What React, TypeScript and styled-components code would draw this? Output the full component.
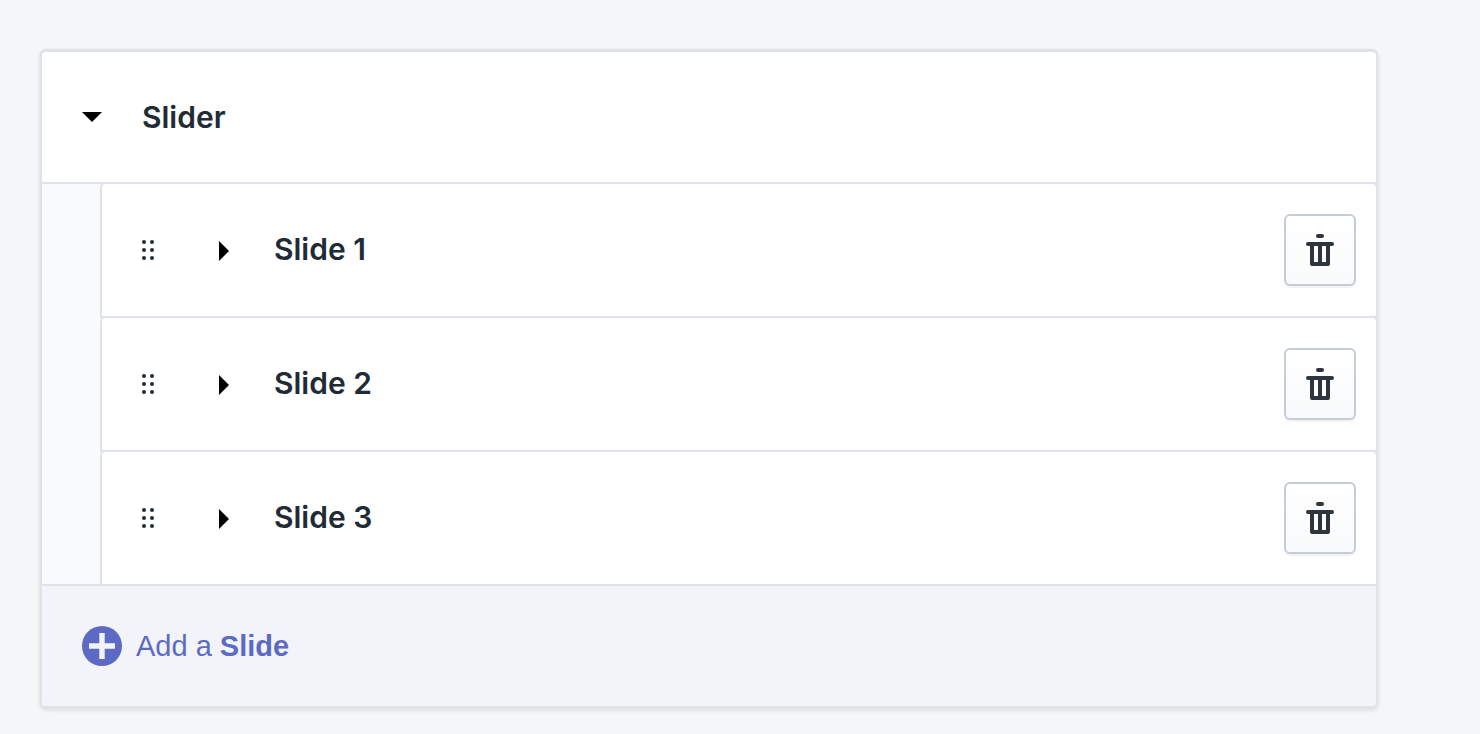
import React, { useState } from "react";
import styled, { createGlobalStyle } from "styled-components";

const GlobalStyle = createGlobalStyle`
  *, *::before, *::after { box-sizing: border-box; }
  body {
    margin: 0;
    background: #f4f6f8;
    color: #212b36;
    font-family: Inter, "Liberation Sans", sans-serif;
  }
  button {
    margin: 0;
    padding: 0;
    border: 0;
    background: none;
    color: inherit;
    font: inherit;
    cursor: pointer;
  }
  svg { display: block; }
`;

const Page = styled.main`
  padding: 50px 102px 26px 40px;
`;

const Card = styled.section`
  border: 2px solid #dfe3e8;
  border-radius: 6px;
  background: #f9fafb;
  overflow: hidden;
  box-shadow: 0 -1px 1px rgba(63, 63, 68, 0.12), 0 2px 4px rgba(63, 63, 68, 0.15);
`;

const Header = styled.header`
  display: flex;
  align-items: center;
  gap: 40px;
  height: 130px;
  padding: 0 40px;
  background: #fff;
`;

const Title = styled.h2`
  margin: 0;
  font-size: 30px;
  line-height: 40px;
  font-weight: 600;
`;

const SlideTitle = styled(Title).attrs({ as: "h3" })`
  flex: 1;
  padding-bottom: 2px;
`;

const SlideList = styled.ul`
  margin: 0;
  padding: 0 0 0 58px;
  list-style: none;
  border-top: 2px solid #dfe3e8;
  background: #f9fafc;
`;

const SlideRow = styled.li`
  display: flex;
  align-items: center;
  height: 136px;
  margin: -2px -2px 0 0;
  padding: 0 20px 0 40px;
  border: 2px solid #dfe3e8;
  border-radius: 6px 6px 0 0;
  background: #fff;

  &:last-child {
    height: 134px;
    border-bottom: 0;
  }
`;

const DragHandle = styled.button`
  margin-right: 64px;
  cursor: grab;
`;

const Toggle = styled.button<{ $inset?: boolean }>`
  margin-right: ${(p) => (p.$inset ? "44px" : "0")};
`;

const DeleteButton = styled.button`
  display: flex;
  align-items: center;
  justify-content: center;
  width: 72px;
  height: 72px;
  border: 2px solid #c4cdd5;
  border-radius: 6px;
  background: linear-gradient(to bottom, #fff, #f9fafb);
  box-shadow: 0 2px 0 rgba(22, 29, 37, 0.05);
`;

const Footer = styled.footer`
  display: flex;
  align-items: center;
  height: 122px;
  padding: 0 40px;
  border-top: 2px solid #dfe3e8;
  background: #f3f4f9;
`;

const AddButton = styled.button`
  display: flex;
  align-items: center;
  gap: 14px;
  color: #5c6ac4;
  font-family: "Liberation Sans", Arial, sans-serif;
  font-size: 29px;
  line-height: 40px;
`;

const CaretDown = () => (
  <svg width="20" height="10" viewBox="0 0 20 10" aria-hidden="true">
    <path d="M0 0H20L10 10Z" fill="#000" />
  </svg>
);

const CaretRight = () => (
  <svg width="12" height="22" viewBox="0 0 12 22" aria-hidden="true">
    <path d="M1 2V22L11 12Z" fill="#000" />
  </svg>
);

const Dots = () => (
  <svg width="12" height="20" viewBox="0 0 12 20" fill="#212b36" aria-hidden="true">
    {[2, 10, 18].map((y) => (
      <React.Fragment key={y}>
        <circle cx="2" cy={y} r="2" />
        <circle cx="10" cy={y} r="2" />
      </React.Fragment>
    ))}
  </svg>
);

const Trash = () => (
  <svg width="28" height="32" viewBox="0 0 28 32" fill="#2f353d" aria-hidden="true">
    <rect x="10" y="0" width="8" height="4" rx="2" />
    <rect x="0" y="8" width="28" height="4" rx="2" />
    <path
      fillRule="evenodd"
      d="M4 10H24V30a2 2 0 0 1-2 2H6a2 2 0 0 1-2-2ZM8 12V28H12V12ZM16 12V28H20V12Z"
    />
  </svg>
);

const PlusCircle = () => (
  <svg width="40" height="40" viewBox="0 0 40 40" aria-hidden="true">
    <circle cx="20" cy="20" r="20" fill="#5c6ac4" />
    <path d="M20 7V33M7 20H33" stroke="#f3f4f9" strokeWidth="5.4" />
  </svg>
);

export default function App() {
  const [slides, setSlides] = useState([1, 2, 3]);

  const addSlide = () => setSlides((s) => [...s, Math.max(0, ...s) + 1]);
  const removeSlide = (n: number) => setSlides((s) => s.filter((i) => i !== n));

  return (
    <>
      <GlobalStyle />
      <Page>
        <Card>
          <Header>
            <Toggle type="button" aria-label="Collapse Slider" aria-expanded="true">
              <CaretDown />
            </Toggle>
            <Title>Slider</Title>
          </Header>
          <SlideList>
            {slides.map((n) => (
              <SlideRow key={n}>
                <DragHandle type="button" aria-label={`Move Slide ${n}`}>
                  <Dots />
                </DragHandle>
                <Toggle $inset type="button" aria-label={`Expand Slide ${n}`} aria-expanded="false">
                  <CaretRight />
                </Toggle>
                <SlideTitle>Slide {n}</SlideTitle>
                <DeleteButton type="button" aria-label={`Delete Slide ${n}`} onClick={() => removeSlide(n)}>
                  <Trash />
                </DeleteButton>
              </SlideRow>
            ))}
          </SlideList>
          <Footer>
            <AddButton type="button" onClick={addSlide}>
              <PlusCircle />
              <span>
                Add a <strong>Slide</strong>
              </span>
            </AddButton>
          </Footer>
        </Card>
      </Page>
    </>
  );
}
